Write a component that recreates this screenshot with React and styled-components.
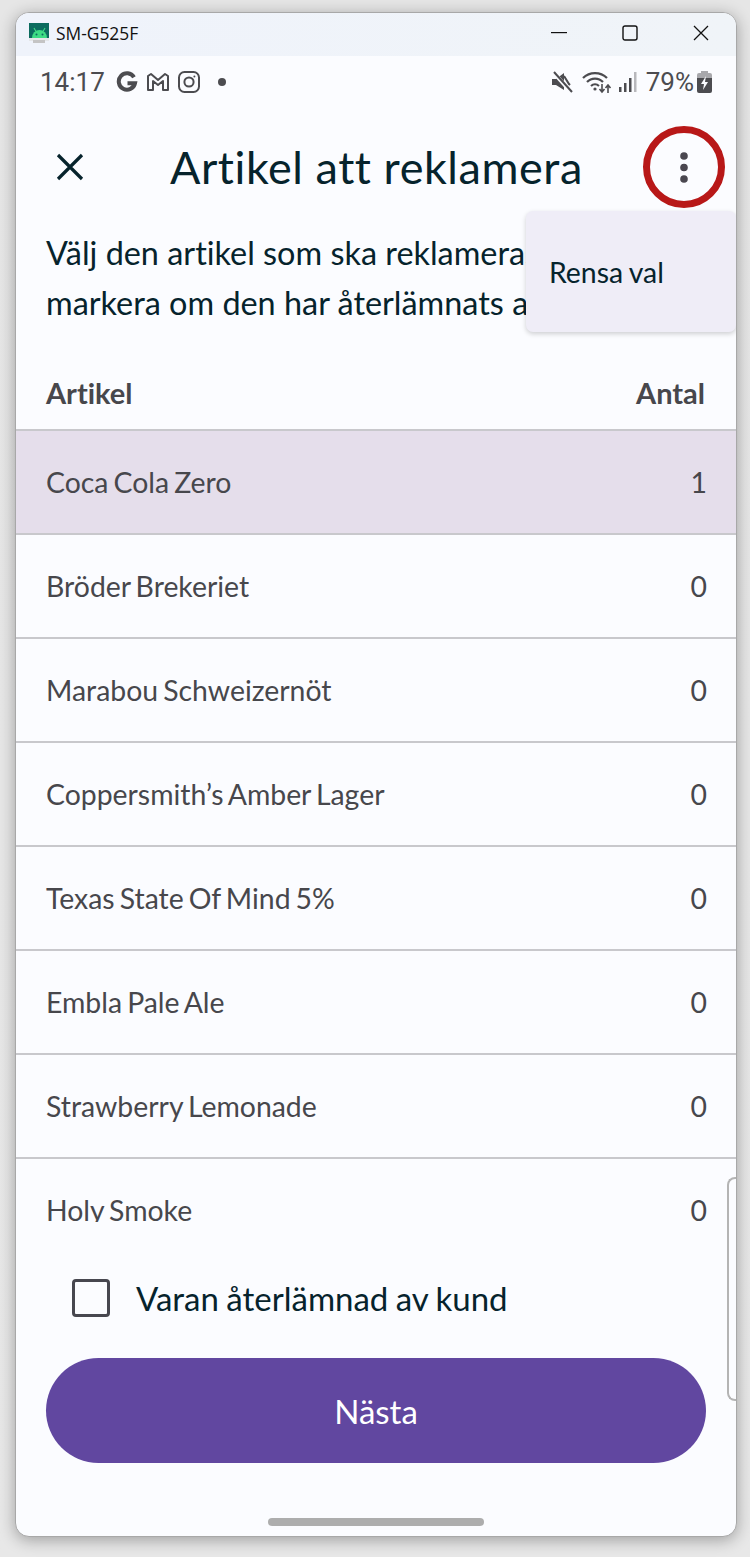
import React from 'react';
import styled, { createGlobalStyle } from 'styled-components';

const Global = createGlobalStyle`
  html, body { margin: 0; padding: 0; background: #e6e6e6; }
  body {
    font-family: Lato, "Liberation Sans", sans-serif;
    font-variant-ligatures: none;
  }
`;

const Page = styled.div`
  width: 750px;
  height: 1557px;
  padding: 12px 13px 0 15px;
  box-sizing: border-box;
  overflow: hidden;
  background: linear-gradient(#e6e6e6, #e8e8e8);
`;

const Win = styled.div`
  position: relative;
  width: 722px;
  height: 1525px;
  box-sizing: border-box;
  border: 1px solid #a8a8a8;
  border-radius: 14px;
  background: #fbfcff;
  box-shadow: 0 3px 16px rgba(0, 0, 0, 0.32);
  display: flex;
  flex-direction: column;
  overflow: hidden;
`;

const TitleBar = styled.div`
  height: 43px;
  padding: 0 0 3px 13px;
  box-sizing: border-box;
  flex: none;
  display: flex;
  align-items: center;
  background: linear-gradient(90deg, #eff3fb, #f0f4f8);
  color: #111;
`;

const TitleText = styled.span`
  margin-left: 7px;
  font-family: "Open Sans", sans-serif;
  font-size: 17.4px;
`;

const WinButtons = styled.div`
  margin-left: auto;
  display: flex;
`;

const WinButton = styled.div`
  width: 71px;
  height: 40px;
  display: flex;
  align-items: center;
  justify-content: center;
`;

const StatusBar = styled.div`
  height: 50px;
  flex: none;
  display: flex;
  align-items: center;
  padding: 2px 24px 0;
  box-sizing: border-box;
  color: #4c4c50;
  font-family: Roboto, sans-serif;
  font-size: 26px;
`;

const StatusIcons = styled.div`
  display: flex;
  align-items: center;
  gap: 8px;
  margin-left: 11px;
`;

const StatusRight = styled.div`
  margin-left: auto;
  display: flex;
  align-items: center;
`;

const Gap = styled.span`
  width: ${p => p.$w}px;
`;

const Header = styled.div`
  height: 124px;
  flex: none;
  display: flex;
  align-items: center;
  padding-left: 38px;
  box-sizing: border-box;
  padding-bottom: 2px;
`;

const HeaderTitle = styled.h1`
  margin: 0 0 0 84px;
  font-size: 45px;
  font-weight: 400;
  color: #06232c;
  letter-spacing: 0.55px;
`;

const Intro = styled.p`
  margin: -2px 0 0;
  padding: 0 0 0 30px;
  height: 127px;
  flex: none;
  font-size: 32.4px;
  line-height: 50px;
  color: #06232c;
  white-space: nowrap;
  overflow: hidden;
`;

const ColumnHead = styled.div`
  height: 76px;
  flex: none;
  display: flex;
  justify-content: space-between;
  align-items: center;
  box-sizing: border-box;
  padding: 0 31px 0 30px;
  font-size: 29px;
  font-weight: 700;
  color: #47474c;
  border-bottom: 2px solid #c8c8cc;
`;

const List = styled.div`
  height: 791px;
  flex: none;
  overflow: hidden;
`;

const Row = styled.div`
  height: 104px;
  box-sizing: border-box;
  padding: 0 29px 0 30px;
  display: flex;
  justify-content: space-between;
  align-items: center;
  font-size: 28.4px;
  word-spacing: -2.2px;
  color: #47474c;
  border-bottom: 2px solid #c8c8cc;
  background: ${p => (p.$selected ? '#e5deeb' : 'transparent')};
`;

const CheckRow = styled.label`
  height: 76px;
  margin-top: 38px;
  flex: none;
  display: flex;
  align-items: center;
  padding-left: 56px;
  font-size: 33px;
  word-spacing: -1px;
  color: #06232c;
`;

const CheckBox = styled.span`
  width: 38px;
  height: 38px;
  box-sizing: border-box;
  border: 3.5px solid #47474f;
  border-radius: 4px;
  margin-right: 26px;
`;

const Primary = styled.button`
  display: block;
  flex: none;
  width: 660px;
  height: 105px;
  margin: 22px 0 0 30px;
  border: 0;
  border-radius: 53px;
  background: #6147a0;
  color: #fff;
  font-family: inherit;
  font-size: 33px;
`;

const HomeBar = styled.div`
  position: absolute;
  left: 252px;
  bottom: 10px;
  width: 216px;
  height: 8px;
  border-radius: 4px;
  background: #adadad;
`;

const Menu = styled.div`
  position: absolute;
  left: 510px;
  top: 198px;
  width: 210px;
  height: 121px;
  box-sizing: border-box;
  padding-left: 23px;
  display: flex;
  align-items: center;
  border-radius: 7px;
  background: #efedf7;
  box-shadow: 0 2px 5px rgba(0, 0, 0, 0.18);
  font-size: 28.4px;
  word-spacing: -1px;
  color: #06232c;
`;

const Highlight = styled.div`
  position: absolute;
  left: 627px;
  top: 113px;
  width: 82px;
  height: 82px;
  box-sizing: border-box;
  border: 7px solid #b81818;
  border-radius: 50%;
`;

const MoreDots = styled.svg`
  position: absolute;
  left: 663px;
  top: 137px;
`;

const ScrollHandle = styled.div`
  position: absolute;
  right: 0;
  top: 1164px;
  width: 9px;
  height: 224px;
  box-sizing: border-box;
  border: 2px solid #b4b4b4;
  border-right: 0;
  border-radius: 8px 0 0 8px;
`;

const rows = [
  ['Coca Cola Zero', 1],
  ['Bröder Brekeriet', 0],
  ['Marabou Schweizernöt', 0],
  ['Coppersmith’s Amber Lager', 0],
  ['Texas State Of Mind 5%', 0],
  ['Embla Pale Ale', 0],
  ['Strawberry Lemonade', 0],
  ['Holy Smoke', 0],
];

function AndroidIcon() {
  return (
    <svg width="20" height="20" viewBox="0 0 20 20">
      <rect x="0" y="0" width="20" height="15" fill="#0b6b5e" />
      <path d="M3 15a7.5 8 0 0 1 15 0z" fill="#3ddc84" />
      <path d="M5 5l2 3.5M16 5l-2 3.5" stroke="#3ddc84" strokeWidth="1.1" />
      <circle cx="7.5" cy="11.5" r="1" fill="#0b6b5e" />
      <circle cx="13.5" cy="11.5" r="1" fill="#0b6b5e" />
      <rect x="0" y="15" width="20" height="3" fill="#e4e6e8" />
      <rect x="4" y="17" width="12" height="3" fill="#c4c4c4" />
    </svg>
  );
}

function GIcon() {
  return (
    <svg width="22" height="22" viewBox="0 0 22 22" fill="none">
      <path d="M18 6.2A8.2 8.2 0 1 0 19 12.2H11.5" stroke="#4c4c50" strokeWidth="4" />
    </svg>
  );
}

function MailIcon() {
  return (
    <svg width="24" height="20" viewBox="0 0 24 20" fill="none">
      <path d="M2 18V4l3-2 7 6 7-6 3 2v14h-5V9l-5 4-5-4v9z" stroke="#4c4c50" strokeWidth="2" strokeLinejoin="round" />
    </svg>
  );
}

function InstaIcon() {
  return (
    <svg width="22" height="22" viewBox="0 0 22 22" fill="none" stroke="#4c4c50" strokeWidth="2">
      <rect x="1" y="1" width="20" height="20" rx="5.5" />
      <circle cx="11" cy="11" r="4.6" />
      <circle cx="16.4" cy="5.6" r="1" fill="#4c4c50" stroke="none" />
    </svg>
  );
}

function MuteIcon() {
  return (
    <svg width="22" height="22" viewBox="0 0 22 22">
      <path d="M1 8h4l8-6v17l-8-5H1z" fill="#4c4c50" />
      <path d="M13 5l5 8 1 1" fill="none" stroke="#4c4c50" strokeWidth="2" />
      <path d="M2 1l18 20" stroke="#fbfcff" strokeWidth="4" />
      <path d="M3 1l18 20" stroke="#4c4c50" strokeWidth="2" />
    </svg>
  );
}

function WifiIcon() {
  return (
    <svg width="30" height="24" viewBox="0 0 30 24" fill="none" stroke="#4c4c50">
      <path d="M1 8a17 17 0 0 1 24 0" strokeWidth="2.2" />
      <path d="M5 12a11 11 0 0 1 16 0" strokeWidth="2.2" />
      <path d="M9 16a6 6 0 0 1 8 0" strokeWidth="2.2" />
      <circle cx="13" cy="19" r="1.6" fill="#4c4c50" stroke="none" />
      <path d="M20 14v8M17.5 19l2.5 3 2.5-3" strokeWidth="1.6" />
      <path d="M26 23v-8M23.5 18l2.5-3 2.5 3" strokeWidth="1.6" />
    </svg>
  );
}

function SignalIcon() {
  return (
    <svg width="20" height="20" viewBox="0 0 20 20" fill="#4c4c50">
      <rect x="1" y="15" width="2.5" height="5" />
      <rect x="6" y="11" width="2.5" height="9" />
      <rect x="11" y="6" width="2.5" height="14" />
      <rect x="16" y="0" width="2.5" height="20" fill="#b8b8bc" />
    </svg>
  );
}

function BatteryIcon() {
  return (
    <svg width="15" height="22" viewBox="0 0 15 22">
      <path d="M4 0h7v2H4z" fill="#a8a8ac" />
      <path d="M0 4a2 2 0 0 1 2-2h11a2 2 0 0 1 2 2v3H0z" fill="#a8a8ac" />
      <path d="M0 7h15v13a2 2 0 0 1-2 2H2a2 2 0 0 1-2-2z" fill="#4c4c50" />
      <path d="M9 5L4 13h3l-1 6 5-8H8z" fill="#fbfcff" />
    </svg>
  );
}

export default function App() {
  return (
    <>
      <Global />
      <Page>
        <Win>
          <TitleBar>
            <AndroidIcon />
            <TitleText>SM-G525F</TitleText>
            <WinButtons>
              <WinButton>
                <svg width="16" height="2"><rect width="16" height="1.2" fill="#111" /></svg>
              </WinButton>
              <WinButton>
                <svg width="16" height="16" fill="none"><rect x="1" y="1" width="14" height="14" rx="2" stroke="#111" strokeWidth="1.4" /></svg>
              </WinButton>
              <WinButton>
                <svg width="16" height="16" fill="none"><path d="M1 1l14 14M15 1L1 15" stroke="#111" strokeWidth="1.3" /></svg>
              </WinButton>
            </WinButtons>
          </TitleBar>
          <StatusBar>
            14:17
            <StatusIcons>
              <GIcon />
              <MailIcon />
              <InstaIcon />
              <svg width="28" height="10"><circle cx="14" cy="5" r="4" fill="#4c4c50" /></svg>
            </StatusIcons>
            <StatusRight>
              <MuteIcon />
              <Gap $w={9} />
              <WifiIcon />
              <Gap $w={6} />
              <SignalIcon />
              <Gap $w={8} />
              79%
              <Gap $w={3} />
              <BatteryIcon />
            </StatusRight>
          </StatusBar>
          <Header>
            <svg width="32" height="32" viewBox="0 0 32 32" fill="none">
              <path d="M4 4l24 24M28 4L4 28" stroke="#06232c" strokeWidth="3.2" />
            </svg>
            <HeaderTitle>Artikel att reklamera</HeaderTitle>
          </Header>
          <Intro>
            Välj den artikel som ska reklameras och
            <br />
            markera om den har återlämnats av kund
          </Intro>
          <ColumnHead>
            <span>Artikel</span>
            <span>Antal</span>
          </ColumnHead>
          <List>
            {rows.map(([name, qty], i) => (
              <Row key={name} $selected={i === 0}>
                <span>{name}</span>
                <span>{qty}</span>
              </Row>
            ))}
          </List>
          <CheckRow>
            <CheckBox />
            Varan återlämnad av kund
          </CheckRow>
          <Primary>Nästa</Primary>
          <HomeBar />
          <ScrollHandle />
          <Menu>Rensa val</Menu>
          <MoreDots width="10" height="36" viewBox="0 0 10 36">
            <circle cx="5" cy="6" r="3.8" fill="#4a4750" />
            <circle cx="5" cy="17.5" r="3.8" fill="#4a4750" />
            <circle cx="5" cy="29" r="3.8" fill="#4a4750" />
          </MoreDots>
          <Highlight />
        </Win>
      </Page>
    </>
  );
}
